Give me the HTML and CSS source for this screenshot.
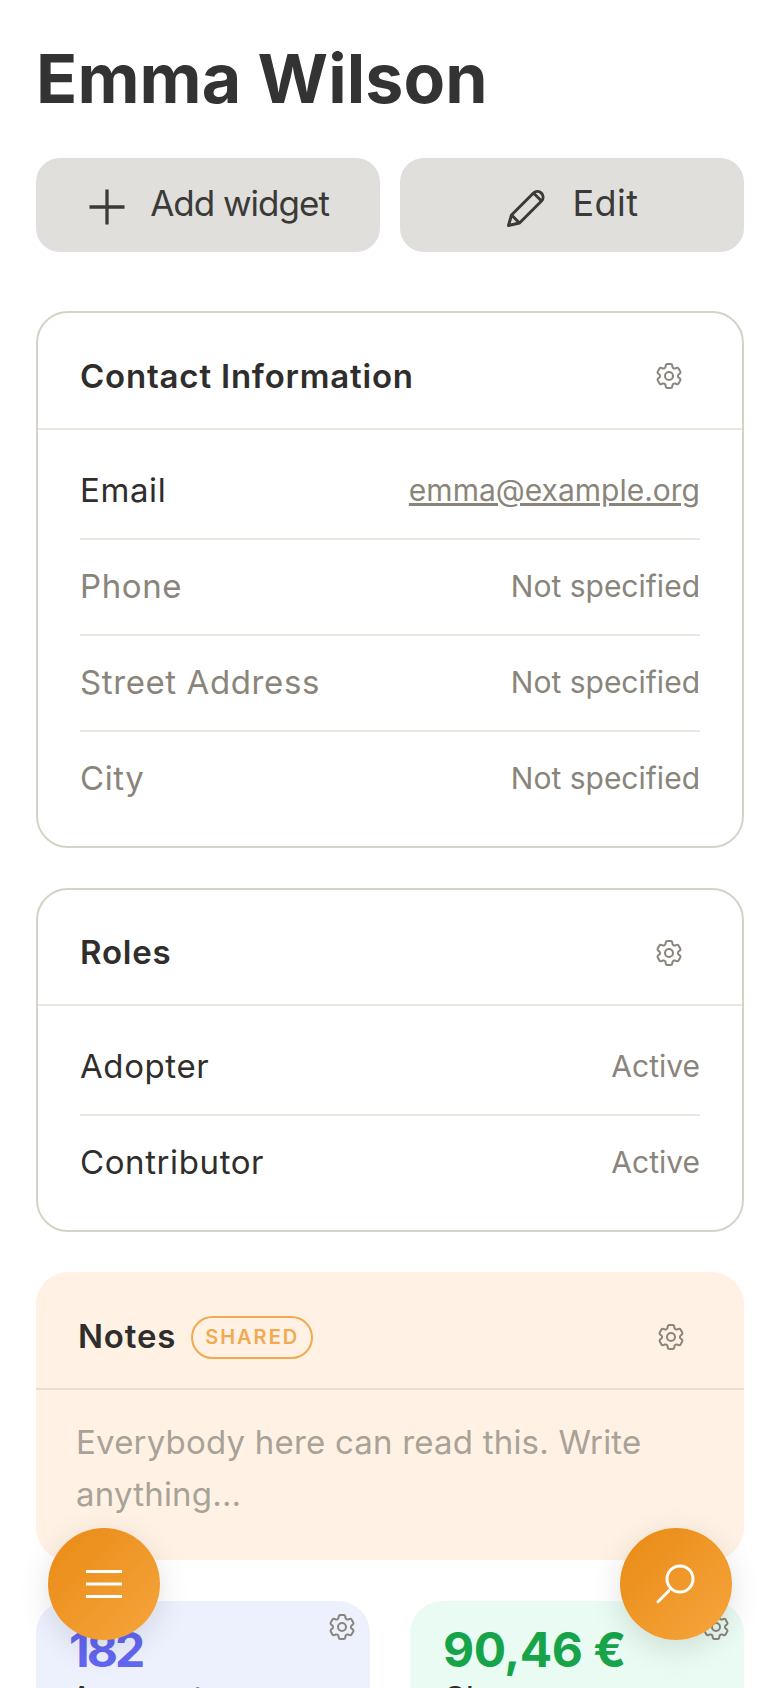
FILE: index.html
```html
<!DOCTYPE html>
<html lang="en">
<head>
  <meta charset="UTF-8" />
  <meta name="viewport" content="width=device-width, initial-scale=1.0" />
  <title>Emma Wilson</title>
  <link rel="stylesheet" href="styles.css">
</head>
<body>
  <svg class="sprites" width="0" height="0">
    <symbol id="gear" viewBox="0 0 24 24">
      <path d="M9.594 3.94c.09-.542.56-.94 1.11-.94h2.593c.55 0 1.02.398 1.11.94l.213 1.281c.063.374.313.686.645.87.074.04.147.083.22.127.324.196.72.257 1.075.124l1.217-.456a1.125 1.125 0 011.37.49l1.296 2.247a1.125 1.125 0 01-.26 1.431l-1.003.827c-.293.24-.438.613-.431.992a6.759 6.759 0 010 .255c-.007.378.138.75.43.99l1.005.828c.424.35.534.954.26 1.43l-1.298 2.247a1.125 1.125 0 01-1.369.491l-1.217-.456c-.355-.133-.75-.072-1.076.124a6.57 6.57 0 01-.22.128c-.331.183-.581.495-.644.869l-.213 1.28c-.09.543-.56.941-1.11.941h-2.594c-.55 0-1.02-.398-1.11-.94l-.213-1.281c-.062-.374-.312-.686-.644-.87a6.52 6.52 0 01-.22-.127c-.325-.196-.72-.257-1.076-.124l-1.217.456a1.125 1.125 0 01-1.369-.49l-1.297-2.247a1.125 1.125 0 01.26-1.431l1.004-.827c.292-.24.437-.613.43-.992a6.932 6.932 0 010-.255c.007-.378-.138-.75-.43-.99l-1.004-.828a1.125 1.125 0 01-.26-1.43l1.297-2.247a1.125 1.125 0 011.37-.491l1.216.456c.356.133.751.072 1.076-.124.072-.044.146-.087.22-.128.332-.183.582-.495.644-.869l.214-1.281z" />
      <path d="M15 12a3 3 0 11-6 0 3 3 0 016 0z" />
    </symbol>
  </svg>

  <main class="page">
    <h1 class="page-title">Emma Wilson</h1>

    <div class="actions">
      <button class="action-btn action-btn-add">
        <svg class="plus-icon" viewBox="3.43 3.43 17.14 17.14"><path d="M12 4.5v15m7.5-7.5h-15" /></svg>
        Add widget
      </button>
      <button class="action-btn action-btn-edit">
        <svg class="pencil-icon" viewBox="14 15 44 44">
          <path d="M17.5 55.5L20.5 45L42.5 23A5.66 5.66 0 0 1 50.5 31L28.5 53Z" />
          <path d="M20.5 45L28.5 53M42.5 23L50.5 31" />
        </svg>
        Edit
      </button>
    </div>

    <section class="card">
      <header class="card-head">
        <h2 class="card-title">Contact Information</h2>
        <svg class="gear"><use href="#gear" /></svg>
      </header>
      <div class="card-body">
        <div class="row">
          <span class="row-label">Email</span>
          <a class="row-value" href="#">emma@example.org</a>
        </div>
        <div class="row row-empty">
          <span class="row-label">Phone</span>
          <span class="row-value">Not specified</span>
        </div>
        <div class="row row-empty">
          <span class="row-label">Street Address</span>
          <span class="row-value">Not specified</span>
        </div>
        <div class="row row-empty">
          <span class="row-label">City</span>
          <span class="row-value">Not specified</span>
        </div>
      </div>
    </section>

    <section class="card card-roles">
      <header class="card-head">
        <h2 class="card-title">Roles</h2>
        <svg class="gear"><use href="#gear" /></svg>
      </header>
      <div class="card-body">
        <div class="row">
          <span class="row-label">Adopter</span>
          <span class="row-value">Active</span>
        </div>
        <div class="row">
          <span class="row-label">Contributor</span>
          <span class="row-value">Active</span>
        </div>
      </div>
    </section>

    <section class="notes">
      <header class="notes-head">
        <h2 class="card-title">Notes</h2>
        <span class="badge">SHARED</span>
        <svg class="gear gear-notes"><use href="#gear" /></svg>
      </header>
      <p class="notes-text">Everybody here can read this. Write anything...</p>
    </section>

    <div class="tiles">
      <div class="tile tile-blue">
        <svg class="gear gear-tile"><use href="#gear" /></svg>
        <div class="tile-value">182</div>
        <div class="tile-label">Accounts</div>
      </div>
      <div class="tile tile-green">
        <svg class="gear gear-tile"><use href="#gear" /></svg>
        <div class="tile-value">90,46 €</div>
        <div class="tile-label">Shares</div>
      </div>
    </div>
  </main>

  <button class="fab fab-menu" aria-label="Menu">
    <svg class="fab-icon" viewBox="0 0 36 30"><path d="M0 2.500h36M0 15h36M0 27.500h36" /></svg>
  </button>
  <button class="fab fab-search" aria-label="Search">
    <svg class="fab-icon" viewBox="0 0 48 48">
      <circle cx="28" cy="19" r="13" />
      <path d="M17 30.700L6 41.700" />
    </svg>
  </button>
</body>
</html>
```

FILE: styles.css
```css
html, body {
  height: 100%;
  margin: 0;
  overflow: hidden;
}
body {
  font-family: Inter, "Noto Sans", sans-serif;
  background-color: #fff;
  color: #2f2e2c;
}
.sprites {
  display: none;
}
.page {
  padding: 38px 36px 0;
}
.page-title {
  margin: 0 0 40px;
  font-size: 68px;
  line-height: 80px;
  font-weight: 700;
  letter-spacing: 0.1px;
  color: #333;
}
.actions {
  display: grid;
  grid-template-columns: 1fr 1fr;
  gap: 20px;
  margin-bottom: 59px;
}
.action-btn {
  display: flex;
  align-items: center;
  justify-content: center;
  height: 94px;
  padding: 0 0 4px;
  border: none;
  border-radius: 24px;
  background-color: #e0dfdb;
  color: #3a3a38;
  font-family: inherit;
}
.action-btn svg {
  margin-top: 8px;
  fill: none;
  stroke: #3a3a38;
}
.action-btn-add {
  gap: 23px;
  font-size: 35px;
  letter-spacing: -1px;
}
.action-btn-edit {
  gap: 23px;
  font-size: 36px;
  letter-spacing: 0.5px;
}
.plus-icon {
  width: 40px;
  height: 40px;
  stroke-width: 1.4;
}
.pencil-icon {
  width: 44px;
  height: 44px;
  stroke-width: 3;
  stroke-linejoin: round;
}
.card {
  margin-bottom: 40px;
  border: 2px solid #d6d2c6;
  border-radius: 32px;
}
.card-head {
  display: flex;
  align-items: center;
  justify-content: space-between;
  height: 40px;
  padding: 43px 57px 32px 42px;
  border-bottom: 2px solid #ebe7df;
}
.card-roles .card-head {
  padding-top: 42px;
  padding-bottom: 32px;
}
.card-roles .card-body {
  padding-top: 14px;
  padding-bottom: 20px;
}
.card-title {
  margin: 0;
  font-size: 33px;
  line-height: 40px;
  font-weight: 600;
  letter-spacing: 0.8px;
}
.gear {
  width: 32px;
  height: 32px;
  flex: none;
  fill: none;
  stroke: #8a857b;
  stroke-width: 1.5;
  stroke-linejoin: round;
}
.card-roles .gear {
  margin-top: 2px;
}
.card-body {
  padding: 14px 42px 20px;
}
.row {
  display: flex;
  align-items: center;
  justify-content: space-between;
  height: 91px;
  padding-bottom: 3px;
  font-size: 33px;
  letter-spacing: 0.6px;
  border-bottom: 2px solid #ebe7df;
}
.row:last-child {
  border-bottom: none;
}
.row-empty .row-label {
  color: #8a857b;
}
.row-value {
  font-size: 30px;
  letter-spacing: 0;
  color: #8a857b;
}
.notes {
  margin-bottom: 41px;
  border-radius: 32px;
  background-color: #fff2e5;
}
.notes-head {
  display: flex;
  align-items: center;
  gap: 15px;
  height: 40px;
  padding: 44px 57px 32px 42px;
  border-bottom: 2px solid #ebdfd0;
}
.badge {
  display: flex;
  align-items: center;
  height: 39px;
  margin-top: 2px;
  padding: 0 12px;
  border: 2px solid #f2a950;
  border-radius: 22px;
  color: #f2a950;
  font-size: 20px;
  font-weight: 600;
  letter-spacing: 2px;
}
.gear-notes {
  margin-top: 2px;
  margin-left: auto;
}
.notes-text {
  margin: 0;
  padding: 26px 60px 40px 40px;
  font-size: 33px;
  line-height: 52px;
  letter-spacing: 0.2px;
  color: #a8a297;
}
.tiles {
  display: grid;
  grid-template-columns: 1fr 1fr;
  gap: 40px;
}
.tile {
  position: relative;
  height: 240px;
  padding: 21px 33px 0;
  border-radius: 32px;
}
.tile-blue {
  background-color: #edf1fe;
}
.tile-green {
  background-color: #e9fbf2;
}
.gear-tile {
  position: absolute;
  top: 10px;
  right: 12px;
}
.tile-value {
  font-size: 48px;
  line-height: 56px;
  font-weight: 700;
}
.tile-blue .tile-value {
  color: #6366f1;
  letter-spacing: -3px;
}
.tile-green .tile-value {
  color: #16a34a;
  letter-spacing: -0.5px;
}
.tile-label {
  margin: 1px 0 0 1px;
  font-size: 34px;
  line-height: 40px;
}
.fab {
  position: fixed;
  top: 1528px;
  display: flex;
  align-items: center;
  justify-content: center;
  width: 112px;
  height: 112px;
  padding: 0;
  border: none;
  border-radius: 50%;
  background: linear-gradient(135deg, #e98a15, #f6a53d);
  box-shadow: 0 8px 32px rgba(0, 0, 0, 0.12);
}
.fab-menu {
  left: 48px;
}
.fab-search {
  right: 48px;
}
.fab-icon {
  fill: none;
  stroke: #fff;
  stroke-width: 3;
  stroke-linecap: round;
}
.fab-menu .fab-icon {
  width: 36px;
  height: 30px;
  stroke-linecap: butt;
}
.fab-search .fab-icon {
  width: 48px;
  height: 48px;
}
```
